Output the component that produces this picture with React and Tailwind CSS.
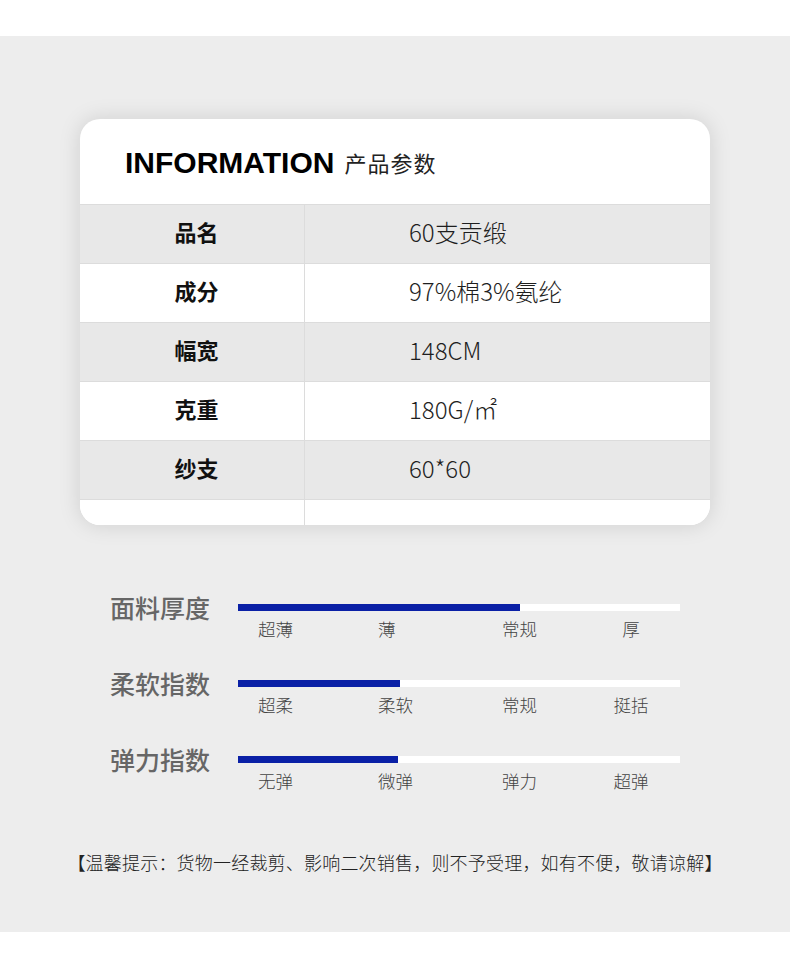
import React from 'react';

const specs = [
    { label: '品名', value: '60支贡缎' },
    { label: '成分', value: '97%棉3%氨纶' },
    { label: '幅宽', value: '148CM' },
    { label: '克重', value: '180G/㎡' },
    { label: '纱支', value: '60*60' },
];

const scales = [
    { title: '面料厚度', fill: 282, marks: ['超薄', '薄', '常规', '厚'] },
    { title: '柔软指数', fill: 162, marks: ['超柔', '柔软', '常规', '挺括'] },
    { title: '弹力指数', fill: 160, marks: ['无弹', '微弹', '弹力', '超弹'] },
];

const markBoxes = ['w-[120px]', 'w-[124px]', 'w-[78px]', 'w-[102px] text-center'];

const cjk = { fontFamily: '"Noto Sans CJK SC", "Noto Sans", sans-serif' };

export default function App() {
    return (
        <div className="w-[790px] bg-white" style={cjk}>
            <div className="h-[36px] bg-white" />

            <div className="h-[896px] bg-[#ededed] pt-[83px] flex flex-col">
                {/* spec card */}
                <div className="ml-[80px] w-[630px] bg-white rounded-[20px] overflow-hidden shadow-[0_0_22px_rgba(0,0,0,0.13)]">
                    <div className="h-[85px] flex items-center pl-[45px] pt-[2px] gap-[10px]">
                        <span
                            className="text-[30px] font-bold text-black tracking-[0px]"
                            style={{ fontFamily: '"Liberation Sans", Arial, sans-serif' }}
                        >
                            INFORMATION
                        </span>
                        <span className="text-[22px] text-[#222] tracking-[1px]">产品参数</span>
                    </div>

                    {specs.map((s, i) => (
                        <div
                            key={s.label}
                            className={`flex h-[59px] border-t border-[#dcdcdc] ${i % 2 === 0 ? 'bg-[#e8e8e8]' : 'bg-white'}`}
                        >
                            <div className="w-[225px] border-r border-[#dcdcdc] flex items-center justify-center pl-[9px] pb-[5px] text-[22px] font-bold text-[#111]">
                                {s.label}
                            </div>
                            <div className="flex-1 flex items-center pl-[104px] pb-[5px] text-[24px] font-light text-[#1e1e1e]">
                                {s.value}
                            </div>
                        </div>
                    ))}

                    <div className="flex h-[26px] border-t border-[#dcdcdc] bg-white">
                        <div className="w-[225px] border-r border-[#dcdcdc]" />
                        <div className="flex-1" />
                    </div>
                </div>

                {/* fabric scales */}
                <div className="mt-[66px] flex flex-col">
                    {scales.map((sc) => (
                        <div key={sc.title} className="h-[76px] flex pl-[110px]">
                            <div className="w-[128px] text-[25px] leading-[32px] font-medium text-[#666]">
                                {sc.title}
                            </div>
                            <div className="pt-[13px]">
                                <div className="w-[442px] h-[7px] bg-white">
                                    <div className="h-full bg-[#0a20a6]" style={{ width: sc.fill }} />
                                </div>
                                <div className="flex mt-[8px] pl-[20px] text-[17.5px] leading-[20px] font-light text-[#444]">
                                    {sc.marks.map((m, j) => (
                                        <div key={m + j} className={markBoxes[j]}>
                                            {m}
                                        </div>
                                    ))}
                                </div>
                            </div>
                        </div>
                    ))}
                </div>

                <div className="mt-[31px] text-center text-[18px] leading-[24px] tracking-[0.2px] font-light text-[#222]">
                    【温馨提示：货物一经裁剪、影响二次销售，则不予受理，如有不便，敬请谅解】
                </div>
            </div>

            <div className="h-[34px] bg-white" />
        </div>
    );
}
